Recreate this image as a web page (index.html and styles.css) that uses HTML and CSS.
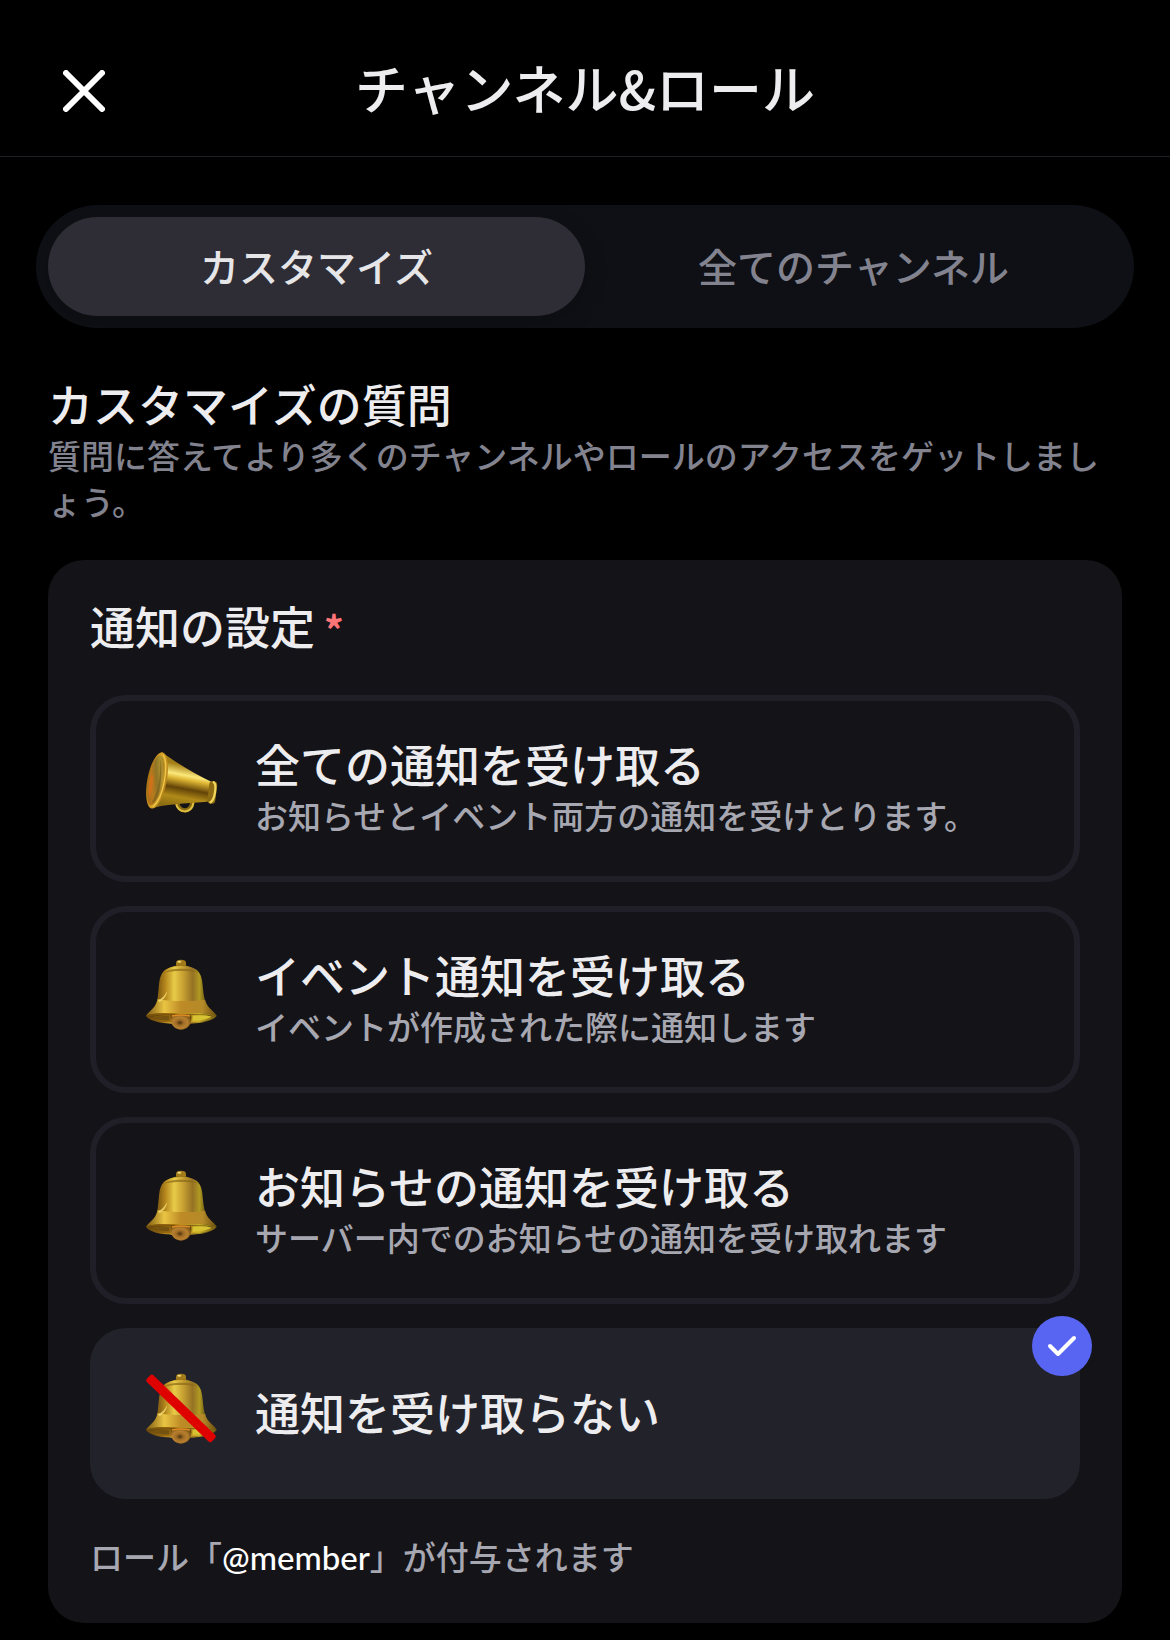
FILE: index.html
```html
<!DOCTYPE html>
<html lang="ja">
<head>
<meta charset="utf-8">
<meta name="viewport" content="width=device-width, initial-scale=1">
<title>チャンネル&amp;ロール</title>
<link rel="stylesheet" href="styles.css">
</head>
<body>
<svg class="defs" width="0" height="0" aria-hidden="true">
  <defs>
    <linearGradient id="bell-body" x1="0" x2="1" y1="0" y2="0">
      <stop offset="0" stop-color="#5a3d0a"/>
      <stop offset=".2" stop-color="#8f6614"/>
      <stop offset=".28" stop-color="#b88a1e"/>
      <stop offset=".4" stop-color="#e8cb48"/>
      <stop offset=".52" stop-color="#c9a232"/>
      <stop offset=".66" stop-color="#967224"/>
      <stop offset=".76" stop-color="#b09a22"/>
      <stop offset=".84" stop-color="#6b5a14"/>
      <stop offset="1" stop-color="#5a430d"/>
    </linearGradient>
    <linearGradient id="bell-flare" x1="0" x2="1" y1="0" y2="0">
      <stop offset="0" stop-color="#7d5810"/>
      <stop offset=".26" stop-color="#e9c443"/>
      <stop offset=".5" stop-color="#bd8a26"/>
      <stop offset=".8" stop-color="#b58a28"/>
      <stop offset="1" stop-color="#6b4e10"/>
    </linearGradient>
    <linearGradient id="bell-rim" x1="0" x2="1" y1="0" y2="0">
      <stop offset="0" stop-color="#6b4a0d"/>
      <stop offset=".4" stop-color="#a8740f"/>
      <stop offset=".75" stop-color="#d0b52a"/>
      <stop offset="1" stop-color="#6f5610"/>
    </linearGradient>
    <radialGradient id="bell-clapper" cx=".45" cy=".55" r=".6">
      <stop offset="0" stop-color="#4e330b"/>
      <stop offset=".3" stop-color="#a06c26"/>
      <stop offset=".6" stop-color="#b8802f"/>
      <stop offset="1" stop-color="#6b4a0d"/>
    </radialGradient>
    <linearGradient id="horn-body" x1=".65" x2=".45" y1="0" y2="1">
      <stop offset="0" stop-color="#a8801a"/>
      <stop offset=".24" stop-color="#a27c14"/>
      <stop offset=".42" stop-color="#fbe87a"/>
      <stop offset=".5" stop-color="#dcb432"/>
      <stop offset=".66" stop-color="#634408"/>
      <stop offset=".82" stop-color="#b08a18"/>
      <stop offset="1" stop-color="#8c6c12"/>
    </linearGradient>
    <linearGradient id="horn-mouth" x1="0" x2="1" y1="1" y2="0">
      <stop offset="0" stop-color="#9a6a18"/>
      <stop offset=".35" stop-color="#b9791c"/>
      <stop offset=".55" stop-color="#8f7426"/>
      <stop offset=".75" stop-color="#b39430"/>
      <stop offset="1" stop-color="#8f6e18"/>
    </linearGradient>
    <linearGradient id="horn-ring" x1="0" x2="1" y1="0" y2="0">
      <stop offset="0" stop-color="#a86f12"/>
      <stop offset=".5" stop-color="#d9a428"/>
      <stop offset="1" stop-color="#b8841c"/>
    </linearGradient>
    <symbol id="bell" viewBox="6 33 261 261">
      <path d="M138 62V53Q138 44 153 44Q168 44 168 53V62Z" fill="#a27a1a"/>
      <ellipse cx="148" cy="50" rx="6" ry="3" fill="#f0dc7a"/>
      <path d="M128 65Q153 54 178 65L174 72H132Z" fill="#9c781a"/>
      <path d="M48 212C60 196 78 190 83 158C87 130 86 110 92 94C100 72 120 63 153 63C186 63 206 72 213 94C219 112 218 140 224 162C231 190 250 196 260 212C250 230 205 237 153 237C101 237 58 230 48 212Z" fill="url(#bell-body)"/>
      <path d="M83 162C115 170 190 170 225 164C231 190 250 196 260 212C230 201 190 204 153 205C110 205 74 202 48 212C60 196 79 188 83 162Z" fill="url(#bell-flare)"/>
      <path d="M84 166C98 160 106 148 112 138C108 156 100 166 88 172Z" fill="#f2dc72" opacity=".8"/>
      <path d="M100 84C118 68 188 66 206 84C186 76 124 76 100 84Z" fill="#8a6818" opacity=".7"/>
      <path d="M48 212C75 201 115 205 153 205C195 205 235 202 260 212C250 227 210 233 153 233C98 233 58 228 48 212Z" fill="url(#bell-rim)"/>
      <path d="M58 216C85 208 120 209 153 209C190 209 225 208 248 214" fill="none" stroke="#5c400c" stroke-width="3" opacity=".7"/>
      <path d="M190 212Q225 209 245 215Q225 225 188 227Z" fill="#d8c433"/>
      <path d="M66 218Q90 212 118 212V226Q85 225 66 218Z" fill="#74520f"/>
      <path d="M122 211Q153 204 184 211C188 238 172 254 153 254C134 254 118 238 122 211Z" fill="url(#bell-clapper)"/>
      <path d="M126 213Q153 207 180 213" fill="none" stroke="#e18c24" stroke-width="5"/>
    </symbol>
  </defs>
</svg>

<header class="header">
  <button class="close" type="button" aria-label="閉じる">
    <svg class="close-icon" viewBox="0 0 42 42" aria-hidden="true"><path d="M3 3L39 39M39 3L3 39"/></svg>
  </button>
  <h1 class="title">チャンネル&amp;ロール</h1>
</header>

<main class="content">
  <div class="tabs" role="tablist">
    <button class="tab tab-active" type="button" role="tab" aria-selected="true">カスタマイズ</button>
    <button class="tab" type="button" role="tab" aria-selected="false">全てのチャンネル</button>
  </div>

  <section class="questions">
    <h2 class="heading">カスタマイズの質問</h2>
    <p class="lead">質問に答えてより多くのチャンネルやロールのアクセスをゲットしましょう。</p>

    <fieldset class="card" aria-labelledby="question">
      <h3 class="heading question" id="question">通知の設定<span class="required">*</span></h3>
      <div class="options">
        <label class="option">
          <input class="option-input" type="radio" name="notify">
          <svg class="emoji" viewBox="6 30 261 261" aria-hidden="true">
            <path d="M141 200C143 234 186 236 187 200" fill="none" stroke="#8a6a10" stroke-width="13" stroke-linecap="round"/>
            <path d="M138 204C142 237 187 238 190 204" fill="none" stroke="#e0c044" stroke-width="6" stroke-linecap="round"/>
            <path d="M98 53C140 84 200 120 250 143L243 199C190 206 130 204 72 218Z" fill="url(#horn-body)"/>
            <rect x="235" y="138" width="24" height="68" rx="11" fill="#8c6b12" transform="rotate(7 246 171)"/>
            <path d="M251 142Q259 147 255 172T241 202" fill="none" stroke="#f0d55c" stroke-width="7" stroke-linecap="round"/>
            <ellipse cx="81" cy="136" rx="29" ry="86" transform="rotate(11 81 136)" fill="url(#horn-ring)"/>
            <ellipse cx="77" cy="136" rx="21" ry="76" transform="rotate(11 77 136)" fill="url(#horn-mouth)"/>
            <path d="M62 122C56 146 54 170 58 190C66 170 70 146 70 120Z" fill="#d8701a" opacity=".75"/>
            <path d="M66 200C84 174 94 120 90 72C100 102 92 182 68 205Z" fill="#77601a" opacity=".7"/>
            <path d="M100 60C117 90 101 190 69 215" fill="none" stroke="#edc94c" stroke-width="4"/>
          </svg>
          <span class="option-text">
            <span class="option-title">全ての通知を受け取る</span>
            <span class="option-desc">お知らせとイベント両方の通知を受けとります。</span>
          </span>
        </label>
        <label class="option">
          <input class="option-input" type="radio" name="notify">
          <svg class="emoji" aria-hidden="true"><use href="#bell"/></svg>
          <span class="option-text">
            <span class="option-title">イベント通知を受け取る</span>
            <span class="option-desc">イベントが作成された際に通知します</span>
          </span>
        </label>
        <label class="option">
          <input class="option-input" type="radio" name="notify">
          <svg class="emoji" aria-hidden="true"><use href="#bell"/></svg>
          <span class="option-text">
            <span class="option-title">お知らせの通知を受け取る</span>
            <span class="option-desc">サーバー内でのお知らせの通知を受け取れます</span>
          </span>
        </label>
        <label class="option option-selected">
          <input class="option-input" type="radio" name="notify" checked>
          <svg class="emoji" viewBox="0 0 261 261" aria-hidden="true">
            <use href="#bell" width="261" height="261"/>
            <rect x="12" y="102" width="271" height="28" rx="7" transform="rotate(44 148 115)" fill="#df0000"/>
          </svg>
          <span class="option-text">
            <span class="option-title">通知を受け取らない</span>
          </span>
          <svg class="badge" viewBox="0 0 60 60" aria-hidden="true"><circle cx="30" cy="30" r="30"/><path d="M18 30L26 38L42 22"/></svg>
        </label>
      </div>
      <p class="note">ロール「<span class="role">@member</span>」が付与されます</p>
    </fieldset>
  </section>
</main>
</body>
</html>
```
FILE: styles.css
```css
* {
  box-sizing: border-box;
}

body {
  margin: 0;
  background: #000;
  color: #ededef;
  font-family: "Noto Sans CJK JP", sans-serif;
  font-weight: 500;
}

.defs {
  position: absolute;
}

.header {
  display: grid;
  grid-template-columns: 42px 1fr 42px;
  align-items: end;
  padding: 48px 63px 30px;
  border-bottom: 1px solid #1f1f26;
}

.close {
  display: flex;
  padding: 0 0 14px;
  border: 0;
  background: none;
}

.close-icon {
  width: 42px;
  height: 42px;
  fill: none;
  stroke: #fff;
  stroke-width: 6;
  stroke-linecap: round;
}

.title {
  margin: 0;
  font-size: 53px;
  font-weight: 500;
  line-height: 78px;
  text-align: center;
}

.content {
  padding: 48px 36px 17px;
}

.tabs {
  display: flex;
  padding: 12px;
  border-radius: 62px;
  background: #0f1015;
}

.tab {
  flex: 1;
  padding: 20px 0 22px;
  border: 0;
  border-radius: 50px;
  background: none;
  color: #82838f;
  font: inherit;
  font-size: 39px;
  line-height: 57px;
}

.tab-active {
  background: #2e2d35;
  color: #e6e6e9;
  box-shadow: 0 6px 24px rgba(0, 0, 0, 0.2);
}

.questions {
  padding: 48px 12px 0;
}

.heading {
  margin: 0;
  font-size: 45px;
  font-weight: 500;
  line-height: 56px;
}

.lead {
  margin: 0 0 36px;
  color: #82838f;
  font-size: 33px;
  line-height: 46px;
  line-break: anywhere;
}

.card {
  min-width: 0;
  margin: 0;
  padding: 38px 42px 44px;
  border: 0;
  border-radius: 36px;
  background: #141318;
}

.question {
  display: flex;
  gap: 9px;
}

.required {
  color: #ff7476;
  font-size: 39px;
  font-weight: 700;
  line-height: 60px;
  height: 56px;
}

.options {
  display: flex;
  flex-direction: column;
  gap: 24px;
  margin: 41px 0 34px;
}

.option {
  position: relative;
  display: flex;
  align-items: center;
  gap: 36px;
  padding: 35px 36px;
  border: 6px solid #201f28;
  border-radius: 36px;
}

.option-selected {
  border-color: #22222a;
  background: #22222a;
}

.option-input {
  position: absolute;
  opacity: 0;
}

.emoji {
  flex: none;
  width: 87px;
  height: 89px;
}

.option-text {
  display: flex;
  flex-direction: column;
  padding-bottom: 3px;
}

.option-title {
  font-size: 45px;
  line-height: 56px;
}

.option-desc {
  color: #a6a7b0;
  font-size: 33px;
  line-height: 46px;
}

.badge {
  position: absolute;
  top: -18px;
  right: -18px;
  width: 60px;
  height: 60px;
  fill: #5865f2;
}

.badge path {
  fill: none;
  stroke: #fff;
  stroke-width: 4;
  stroke-linecap: round;
  stroke-linejoin: round;
}

.note {
  margin: 0;
  color: #a6a7b0;
  font-size: 33px;
  line-height: 46px;
}

.role {
  color: #fff;
  font-family: Lato, "Noto Sans CJK JP", sans-serif;
  line-height: 1;
}
```
